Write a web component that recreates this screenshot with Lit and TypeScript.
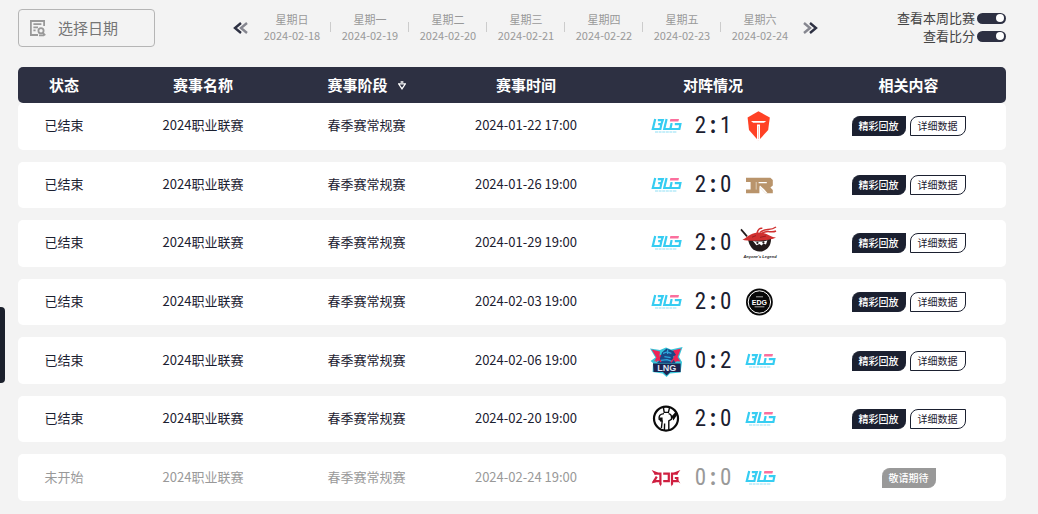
import { LitElement, html, css, svg, nothing, SVGTemplateResult } from "lit";
import { customElement, property, state } from "lit/decorators.js";

type Team = "blg" | "tes" | "rng" | "al" | "edg" | "lng" | "ig" | "jdg";

interface Match {
  time: string;
  home: Team;
  away: Team;
  score: [number, number];
  finished: boolean;
}

const DAYS: [string, string][] = [
  ["星期日", "2024-02-18"],
  ["星期一", "2024-02-19"],
  ["星期二", "2024-02-20"],
  ["星期三", "2024-02-21"],
  ["星期四", "2024-02-22"],
  ["星期五", "2024-02-23"],
  ["星期六", "2024-02-24"],
];

const MATCHES: Match[] = [
  { time: "2024-01-22 17:00", home: "blg", away: "tes", score: [2, 1], finished: true },
  { time: "2024-01-26 19:00", home: "blg", away: "rng", score: [2, 0], finished: true },
  { time: "2024-01-29 19:00", home: "blg", away: "al", score: [2, 0], finished: true },
  { time: "2024-02-03 19:00", home: "blg", away: "edg", score: [2, 0], finished: true },
  { time: "2024-02-06 19:00", home: "lng", away: "blg", score: [0, 2], finished: true },
  { time: "2024-02-20 19:00", home: "ig", away: "blg", score: [2, 0], finished: true },
  { time: "2024-02-24 19:00", home: "jdg", away: "blg", score: [0, 0], finished: false },
];

const LOGOS: Record<Team, SVGTemplateResult> = {
  blg: svg`
    <g fill="none" stroke="#36cdf2" stroke-width="2.2">
      <path d="M9.2 13 6.8 23H14.4L15.4 18.2H12.2M11.8 14.1H16.8L15.4 18.2"/>
      <path d="M20.6 13 18.2 23H24.4"/>
      <path d="M26.4 18.2H24.4M25.6 17.2 24.4 23H33.4L34.4 18.2H28.8"/>
    </g>
    <path d="M24.4 13H33L32.4 15.4H23.8Z" fill="#fb6f9d"/>
    <path d="M9 26H31" stroke="#8fe0f5" stroke-width="1.2" stroke-dasharray="3 .6"/>`,
  tes: svg`
    <path d="M18.4 5.2 29.8 11.4 28.2 24 18.4 34.8 9 24 7.6 11.4Z" fill="#ff4125"/>
    <path d="M11 15H26.2L24 16.8H13.2ZM17 18.4H20V34L18.5 35 17 34Z" fill="#fff"/>
    <path d="M18.5 20V33" stroke="#ffb3a5" stroke-width=".8"/>`,
  rng: svg`
    <path d="M6 12.8H30.4L32.8 15V20.6L30.4 22.6 32.8 25V28.2H25.6L19.4 22V28.2H6V24.6H10.6V17H6Z" fill="#b9946b"/>
    <path d="M18.6 17H26.8V18.2H18.6ZM20 20.4 24.6 24.8 27.6 28.2H25.6L19.4 22Z" fill="#fff"/>
    <path d="M16.2 17V24.6" stroke="#e8dccd" stroke-width=".8"/>`,
  al: svg`
    <path d="M8 16H31C31.4 23 26 28.6 19.6 28.6S9 23 8 16Z" fill="#221a1a"/>
    <path d="M12.6 17.4C15 19 24 19 27.4 17.2L26 21.6 23.4 20.6 21.6 22.4 19.4 21 16.4 22.2Z" fill="#fff"/>
    <circle cx="17.4" cy="19.8" r="1.1" fill="#221a1a"/><circle cx="23.4" cy="19.4" r="1.1" fill="#221a1a"/>
    <path d="M1 6.4 7 13.4" stroke="#221a1a" stroke-width="1.7"/>
    <path d="M2.4 16.8C7 15 9 10.4 18 9.6 27 9 29 13.6 36 14.6 31 17.6 10 19 2.4 16.8Z" fill="#d0302f"/>
    <path d="M17 10C18 6.4 20 4.6 22.4 5.4M20 9.6C25 4.4 30 8.6 36 4M22 10.4C27 6.4 31 10.4 36 8" fill="none" stroke="#d0302f" stroke-width="1.5"/>
    <path d="M12 14.2 16 12.6M20 14.4 26 13" stroke="#8c1c20" stroke-width=".8"/>
    <text x="20" y="34.8" class="caption">Anyone's Legend</text>`,
  edg: svg`
    <circle cx="19.4" cy="20" r="13.4" fill="#080808"/>
    <circle cx="19.4" cy="20" r="11.2" fill="none" stroke="#fff" stroke-width="1"/>
    <text x="19.4" y="22.6" class="crest">EDG</text>
    <path d="M16 14.8H23M14.6 24.8H24.4" stroke="#aaa" stroke-width="1"/>`,
  lng: svg`
    <path d="M4 7.4 14 9 20 6.4 25 8.4 36.6 6 33 16 36 21 34.6 31.6 24 32.4 20.6 36 16.6 32.4 6.6 31 7 22 4.6 20 9.4 16.6Z" fill="#36c6da"/>
    <path d="M5.6 8.6 14 10.4 13 18 8 20.6 10.4 16.4ZM27 9.4 35 7.6 31.6 16 34.4 20.6 28 20ZM14 14H18L16 20H12Z" fill="#ef2457"/>
    <path d="M13 20 16 11.4 20.6 7.4 27.4 10 30 14 27 15.4 29.4 22H11Z" fill="#194785"/>
    <path d="M17 12.4 21 11 25.4 12.4M18.4 15.6 24.6 16.6M15 19.4 21 18.6 26 20.4M21.6 8.6V13" fill="none" stroke="#2fa6dc" stroke-width="1.3"/>
    <path d="M10 20.6 13 17.6 15 21M25 21.4 28 17.4 30 21" fill="none" stroke="#ef2457" stroke-width="1.3"/>
    <path d="M7 22.6H34.6V31H24.4L20.6 34.4 17 31H7.6Z" fill="#1c2350"/>
    <text x="20.8" y="30" class="banner">LNG</text>`,
  ig: svg`
    <circle cx="20" cy="19.6" r="12" fill="#fff" stroke="#0b0b0b" stroke-width="2.2"/>
    <path d="M17.4 8.4 18.2 13.4H22.4L23.6 8.4M18 14.6C13.6 15 12.6 17 13.2 20.4L16.2 22.2 15.4 29M22.6 14.6C24.8 15 26 17 25.4 20.4L22.8 22V31M18.4 31 18.6 24.6" fill="none" stroke="#0b0b0b" stroke-width="1.4"/>
    <path d="M13 18.4H16.6V22L14.6 23ZM25.4 17.4 30 12.6 31 16 27.4 21.4Z" fill="#0b0b0b"/>`,
  jdg: svg`
    <g fill="none" stroke="#cf1f40" stroke-width="2.2">
      <path d="M8.4 15.6H14.4V26.4M14.4 23.2H8L10.8 18.6"/>
      <path d="M17.2 15.6H22.8V23.2H17.2"/>
      <path d="M31.6 15.6H26V26.4M26 23.2H31.4V20H28.8"/>
    </g>
    <path d="M5.6 12 12 14.6 9 16.8ZM34.4 12 28 14.6 31 16.8ZM5.6 25.6 8 21.6 10 24.2ZM13.3 25.6H15.5L14.8 28.6ZM25 25.6H27.2L25.6 28.6ZM30.4 22.4H32.6L34.4 25.4Z" fill="#cf1f40"/>`,
};

@customElement("team-logo")
export class TeamLogo extends LitElement {
  @property() team: Team = "blg";

  static styles = css`
    :host {
      display: block;
      width: 40px;
      height: 40px;
    }
    .mark {
      display: block;
      width: 100%;
      height: 100%;
    }
    .caption,
    .crest,
    .banner {
      font-family: "Liberation Sans", sans-serif;
      font-weight: 700;
      text-anchor: middle;
    }
    .caption {
      font-size: 4px;
      font-style: italic;
      fill: #221a1a;
    }
    .crest {
      font-size: 7px;
      fill: #fff;
    }
    .banner {
      font-size: 9px;
      fill: #dfe3f2;
    }
  `;

  render() {
    return html`<svg class="mark" viewBox="0 0 40 40" role="img" aria-label=${this.team.toUpperCase()}>
      ${LOGOS[this.team]}
    </svg>`;
  }
}

@customElement("app-root")
export class AppRoot extends LitElement {
  @state() private showScore = true;
  @state() private weekOnly = true;

  static styles = css`
    :host {
      display: block;
      font-family: "Noto Sans CJK SC", sans-serif;
      font-size: 13px;
      line-height: 20px;
      color: #1b2030;
      background: #f3f3f3;
    }
    * {
      box-sizing: border-box;
    }
    button,
    input {
      font: inherit;
      color: inherit;
      margin: 0;
    }
    button {
      padding: 0;
      border: 0;
      background: none;
      cursor: pointer;
    }
    .page {
      display: flex;
      flex-direction: column;
      min-height: 100vh;
      padding: 9px 32px 13px 18px;
    }
    .toolbar {
      display: flex;
      justify-content: space-between;
      align-items: flex-start;
      margin-bottom: 20px;
    }
    .picker {
      display: flex;
      align-items: center;
      gap: 11px;
      width: 137px;
      height: 38px;
      padding: 0 10px;
      border: 1px solid #b5b5b5;
      border-radius: 4px;
    }
    .picker-icon {
      flex: none;
      width: 18px;
      height: 18px;
    }
    .picker-input {
      min-width: 0;
      flex: 1;
      padding: 0;
      border: 0;
      outline: 0;
      background: none;
      font-size: 15px;
    }
    .picker-input::placeholder {
      color: #757575;
      opacity: 1;
    }
    .week {
      display: flex;
      align-items: center;
      gap: 14px;
      height: 38px;
    }
    .arrow {
      display: block;
      width: 16px;
      height: 14px;
    }
    .arrow-icon {
      display: block;
    }
    .days {
      display: flex;
      margin: 0;
      padding: 0 0 2px;
      list-style: none;
    }
    .day {
      display: flex;
      align-items: center;
      text-align: center;
      font-size: 11px;
      line-height: 16px;
      color: #999;
    }
    .day + .day::before {
      content: "";
      width: 1px;
      height: 10px;
      margin: 0 10px;
      background: #ccc;
    }
    .day-text {
      min-width: 57px;
    }
    .day-name,
    .day-date {
      display: block;
    }
    .switches {
      display: flex;
      flex-direction: column;
      align-items: flex-end;
    }
    .switch {
      display: flex;
      align-items: center;
      gap: 2px;
      line-height: 18px;
      color: #444;
    }
    .switch-box {
      appearance: none;
      display: flex;
      align-items: center;
      width: 29px;
      height: 11px;
      padding: 0 2px;
      border-radius: 6px;
      background: #aaa;
      cursor: pointer;
    }
    .switch-box::before {
      content: "";
      width: 8px;
      height: 8px;
      border-radius: 50%;
      background: #fff;
    }
    .switch-box:checked {
      justify-content: flex-end;
      background: #2d3042;
    }
    .matches {
      display: flex;
      flex-direction: column;
      flex: 1;
    }
    .body {
      display: flex;
      flex-direction: column;
      flex: 1;
      gap: 12px;
    }
    .row {
      display: grid;
      grid-template-columns: 92fr 186fr 141fr 178fr 196fr 195fr;
      align-items: center;
      border-radius: 5px;
    }
    .head-row {
      height: 36px;
      background: #2d3042;
      color: #fff;
      font-size: 15px;
    }
    .match-row {
      flex: 1;
      min-height: 46px;
      background: #fff;
    }
    .pending {
      color: #999;
    }
    .head-cell,
    .cell {
      display: flex;
      align-items: center;
      justify-content: center;
      padding: 0;
      white-space: nowrap;
    }
    .head-cell {
      font-weight: 700;
    }
    .text {
      padding-bottom: 2px;
    }
    .filter {
      margin-left: 10px;
    }
    .filter-icon {
      display: block;
      width: 8px;
      height: 9px;
    }
    .versus {
      gap: 8px;
    }
    .score {
      display: grid;
      grid-template-columns: 1fr 1fr 1fr;
      justify-items: center;
      width: 38px;
      font-family: "Liberation Sans Narrow", "Roboto Condensed", Roboto, sans-serif;
      font-size: 23px;
      line-height: 28px;
    }
    .colon {
      font-weight: 700;
    }
    .actions {
      gap: 4px;
    }
    .action {
      height: 20px;
      padding: 0 7px;
      border: 1px solid #1b2030;
      border-width: 1px 0;
      border-radius: 8px 0;
      font-size: 10px;
      line-height: 18px;
    }
    .replay {
      background: #1b2030;
      color: #fff;
      font-weight: 500;
    }
    .details {
      border-width: 1px;
    }
    .waiting {
      border-color: #999;
      background: #999;
      color: #fff;
      font-weight: 500;
    }
    .side-tab {
      position: fixed;
      left: 0;
      top: 307px;
      width: 5px;
      height: 76px;
      border-radius: 0 4px 4px 0;
      background: #1b202c;
    }
  `;

  private arrows(next: boolean) {
    const icon = next
      ? svg`<path d="M2 2 8 7 2 12" stroke="#85868f"/><path d="M8 2 14 7 8 12" stroke="#2d3042"/>`
      : svg`<path d="M14 2 8 7 14 12" stroke="#85868f"/><path d="M8 2 2 7 8 12" stroke="#2d3042"/>`;
    return html`<button class="arrow" type="button" aria-label=${next ? "下一周" : "上一周"}>
      <svg class="arrow-icon" width="16" height="14" viewBox="0 0 16 14" fill="none" stroke-width="2.4">${icon}</svg>
    </button>`;
  }

  private row(match: Match) {
    const [home, away] = this.showScore ? match.score : ["-", "-"];
    return html`<tr class="row match-row ${match.finished ? "" : "pending"}">
      <td class="cell text">${match.finished ? "已结束" : "未开始"}</td>
      <td class="cell text">2024职业联赛</td>
      <td class="cell text">春季赛常规赛</td>
      <td class="cell text">${match.time}</td>
      <td class="cell versus">
        <team-logo .team=${match.home}></team-logo>
        <span class="score"><span>${home}</span><span class="colon">:</span><span>${away}</span></span>
        <team-logo .team=${match.away}></team-logo>
      </td>
      <td class="cell actions">
        ${match.finished
          ? html`<button class="action replay" type="button">精彩回放</button>
              <button class="action details" type="button">详细数据</button>`
          : html`<button class="action waiting" type="button" disabled>敬请期待</button>`}
      </td>
    </tr>`;
  }

  render() {
    return html`
      <main class="page">
        <header class="toolbar">
          <label class="picker">
            <svg class="picker-icon" viewBox="0 0 18 18" fill="none" stroke="#999" stroke-width="1.8" aria-hidden="true">
              <path d="M15.1 7V2H1.9V16H9M4.4 5.2H12.4M4.4 8.4H9M4.4 11.4H6.6"/>
              <circle cx="12" cy="11.8" r="2.6"/>
              <path d="M13.8 13.8 16.2 16.4M10 16.4H15"/>
            </svg>
            <input class="picker-input" type="text" placeholder="选择日期" aria-label="选择日期" readonly />
          </label>
          <nav class="week">
            ${this.arrows(false)}
            <ol class="days">
              ${DAYS.map(
                ([name, date]) => html`<li class="day">
                  <time class="day-text" datetime=${date}
                    ><span class="day-name">${name}</span><span class="day-date">${date}</span></time
                  >
                </li>`
              )}
            </ol>
            ${this.arrows(true)}
          </nav>
          <div class="switches">
            <label class="switch">
              查看本周比赛
              <input
                class="switch-box"
                type="checkbox"
                role="switch"
                .checked=${this.weekOnly}
                @change=${() => (this.weekOnly = !this.weekOnly)}
              />
            </label>
            <label class="switch">
              查看比分
              <input
                class="switch-box"
                type="checkbox"
                role="switch"
                .checked=${this.showScore}
                @change=${() => (this.showScore = !this.showScore)}
              />
            </label>
          </div>
        </header>
        <table class="matches">
          <thead>
            <tr class="row head-row">
              ${["状态", "赛事名称", "赛事阶段", "赛事时间", "对阵情况", "相关内容"].map(
                (title) => html`<th class="head-cell" scope="col">
                  ${title}${title === "赛事阶段"
                    ? html`<button class="filter" type="button" aria-label="筛选阶段">
                        <svg class="filter-icon" viewBox="0 0 8 9" fill="none" stroke="#fff" stroke-width="1.3">
                          <path d="M2.6 1H5.4M.6 2.8H7.4L4 7.8Z"/>
                        </svg>
                      </button>`
                    : nothing}
                </th>`
              )}
            </tr>
          </thead>
          <tbody class="body">
            ${MATCHES.map((match) => this.row(match))}
          </tbody>
        </table>
      </main>
      <aside class="side-tab"></aside>
    `;
  }
}
